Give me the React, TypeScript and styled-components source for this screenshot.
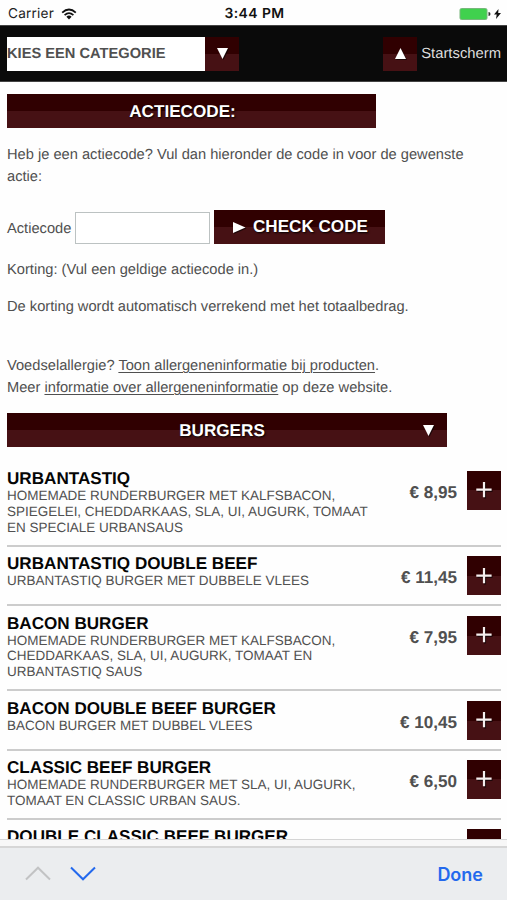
import React from "react";
import styled, { createGlobalStyle } from "styled-components";

const GlobalStyle = createGlobalStyle`
  * { box-sizing: border-box; }
  body { margin: 0; background: #fefefe; }
`;

const gloss = "linear-gradient(to bottom, #300001 0, #300001 50%, #461114 50%, #461114 100%)";

const Screen = styled.div`
  width: 507px;
  height: 900px;
  display: flex;
  flex-direction: column;
  overflow: hidden;
  background: #fefefe;
  color: #505050;
  font-family: "Liberation Sans", Arial, sans-serif;
  font-size: 14.67px;
  white-space: nowrap;
  text-rendering: geometricPrecision;
`;

const StatusBar = styled.header`
  height: 25px;
  flex: none;
  display: grid;
  grid-template-columns: 1fr auto 1fr;
  align-items: center;
  padding: 2px 6px 0 8px;
  color: #222;
  font-family: Inter, sans-serif;
  font-size: 13.6px;
`;

const Carrier = styled.div`
  display: flex;
  align-items: center;
  gap: 7px;
  letter-spacing: 0.2px;
`;

const Clock = styled.div`
  font-size: 13.9px;
  font-weight: 600;
  letter-spacing: 0.45px;
  color: #111;
`;

const Power = styled.div`
  display: flex;
  justify-content: flex-end;
`;

const NavBar = styled.nav`
  height: 57px;
  flex: none;
  display: flex;
  align-items: center;
  justify-content: space-between;
  padding: 0 6px 0 7px;
  background: #0a0a0a;
  border-top: 1px solid #444;
  border-bottom: 1px solid #444;
`;

const Group = styled.div`
  display: flex;
  align-items: center;
`;

const Select = styled.div`
  width: 198px;
  height: 34px;
  line-height: 34px;
  background: #fff;
  font-weight: bold;
`;

const SquareButton = styled.button<{ $tall?: boolean }>`
  width: 34px;
  height: ${(p) => (p.$tall ? 39 : 34)}px;
  padding: 0;
  border: 0;
  background: ${gloss};
  display: flex;
  align-items: center;
  justify-content: center;
`;

const HomeLabel = styled.span`
  margin-left: 4px;
  color: #ddd;
  font-size: 14.8px;
`;

const Page = styled.main`
  flex: 1;
  min-height: 0;
  overflow: hidden;
  padding: 12px 6px 0 7px;
`;

const Banner = styled.h2<{ $width: number; $gap: number; $indent: number }>`
  width: ${(p) => p.$width}px;
  height: 34px;
  margin: 0 0 ${(p) => p.$gap}px;
  padding: 0 11px 0 ${(p) => p.$indent}px;
  display: grid;
  grid-template-columns: 1fr 14px;
  align-items: center;
  text-align: center;
  background: ${gloss};
  color: #fff;
  font-size: 17.15px;
  text-shadow: 1px 1px 2px #000;
`;

const Para = styled.p<{ $gap: number }>`
  margin: 0 0 ${(p) => p.$gap}px;
  line-height: 22px;
`;

const CodeForm = styled.form`
  display: flex;
  align-items: center;
  height: 34px;
  margin-bottom: 15px;
`;

const CodeInput = styled.input`
  width: 135px;
  height: 32px;
  margin: 2px 4px 0 4px;
  border: 1px solid #bcc2c2;
  background: #fff;
`;

const CodeLabel = styled.label`
  width: 64px;
  padding-top: 3px;
`;

const CheckButton = styled.button`
  width: 171px;
  height: 34px;
  display: flex;
  align-items: center;
  gap: 7px;
  padding: 0 0 0 19px;
  border: 0;
  background: ${gloss};
  color: #fff;
  font: bold 17.1px "Liberation Sans", Arial, sans-serif;
  text-shadow: 1px 1px 2px #000;
`;

const Link = styled.a`
  text-decoration: underline;
  text-decoration-thickness: 1px;
  text-underline-offset: 2px;
`;

const Menu = styled.section`
  padding-top: 0.7px;
`;

const Product = styled.article<{ $height: number }>`
  height: ${(p) => p.$height}px;
  display: grid;
  grid-template-columns: 1fr auto 34px;
  column-gap: 10px;
  align-items: start;
  padding-top: 9.3px;
  border-bottom: 2px solid #ccc;
`;

const Title = styled.h3`
  margin: -1px 0 0;
  color: #050505;
  font-size: 17.1px;
  line-height: 18px;
`;

const Description = styled.p`
  margin: 0;
  font-size: 13.48px;
  line-height: 15.8px;
  white-space: pre-line;
`;

const Price = styled.div`
  font-size: 17.1px;
  font-weight: bold;
  line-height: 20px;
  padding-top: 12px;
`;

const Toolbar = styled.footer`
  height: 60px;
  flex: none;
  display: flex;
  align-items: center;
  justify-content: space-between;
  padding: 0 24px 0 25px;
  background: #ebedef;
  border-top: 6px solid #f7f7f7;
  box-shadow: 0 -1px 0 #d5d5d5, inset 0 2px 0 #d6d6d6;
`;

const Arrows = styled.div`
  display: flex;
  gap: 19px;
`;

const Done = styled.button`
  padding: 2px 0 0;
  border: 0;
  background: none;
  color: #2369ed;
  font: 600 18px Inter, sans-serif;
`;

const Wifi = () => (
  <svg width="16" height="12" viewBox="0 0 16 12" fill="none" stroke="#111" strokeWidth="1.8">
    <path d="M1.2 4.6Q8-1.6 14.8 4.6M3.6 7.1Q8 3.2 12.4 7.1" />
    <path d="M5.4 8.7Q8 6.5 10.6 8.7L8 11.6Z" fill="#111" stroke="none" />
  </svg>
);

const Battery = () => (
  <svg width="42" height="14" viewBox="0 0 42 14">
    <rect x="1" y="1.5" width="27" height="11" rx="1.5" fill="#40d14e" stroke="#77b77b" />
    <path d="M29.5 5q2 .2 2 2t-2 2z" fill="#333" />
    <path d="M39.5 2L35 7.5h2.7L37 12l5-6h-2.8z" fill="#111" />
  </svg>
);

const shapes = {
  down: "M1 1H12L6.5 12Z",
  up: "M1 12H12L6.5 1Z",
  right: "M0 1V12L12.5 6.5Z",
};

const Triangle = ({ dir }: { dir: keyof typeof shapes }) => (
  <svg width="13" height="13" viewBox="0 0 13 13" overflow="visible">
    <path d={shapes[dir]} transform="translate(1 1)" fill="#000" opacity=".6" />
    <path d={shapes[dir]} fill="#fff" />
  </svg>
);

const Plus = () => (
  <svg width="18" height="20" viewBox="0 0 18 20" fill="none" strokeWidth="2.2">
    <path d="M10 3.5V18.5M2.5 11H17.5" stroke="#000" opacity=".6" />
    <path d="M9 2V17.3M1.3 9.6H16.6" stroke="#f5eeee" />
  </svg>
);

const Chevron = ({ up }: { up?: boolean }) => (
  <svg width="26" height="15" viewBox="0 0 26 15" fill="none" strokeWidth="2">
    <path d={up ? "M1 13.5L13 1.7L25 13.5" : "M1 1.5L13 13.3L25 1.5"} stroke={up ? "#c2c3c4" : "#2369ed"} />
  </svg>
);

const products = [
  { name: "URBANTASTIQ", text: "HOMEMADE RUNDERBURGER MET KALFSBACON,\nSPIEGELEI, CHEDDARKAAS, SLA, UI, AUGURK, TOMAAT\nEN SPECIALE URBANSAUS", price: "8,95", height: 85.3 },
  { name: "URBANTASTIQ DOUBLE BEEF", text: "URBANTASTIQ BURGER MET DUBBELE VLEES", price: "11,45", height: 59.4 },
  { name: "BACON BURGER", text: "HOMEMADE RUNDERBURGER MET KALFSBACON,\nCHEDDARKAAS, SLA, UI, AUGURK, TOMAAT EN\nURBANTASTIQ SAUS", price: "7,95", height: 85 },
  { name: "BACON DOUBLE BEEF BURGER", text: "BACON BURGER MET DUBBEL VLEES", price: "10,45", height: 59.3 },
  { name: "CLASSIC BEEF BURGER", text: "HOMEMADE RUNDERBURGER MET SLA, UI, AUGURK,\nTOMAAT EN CLASSIC URBAN SAUS.", price: "6,50", height: 69.3 },
  { name: "DOUBLE CLASSIC BEEF BURGER", text: "", price: "", height: 69 },
];

export default function App() {
  return (
    <Screen>
      <GlobalStyle />
      <StatusBar>
        <Carrier>Carrier <Wifi /></Carrier>
        <Clock>3:44 PM</Clock>
        <Power><Battery /></Power>
      </StatusBar>
      <NavBar>
        <Group>
          <Select>KIES EEN CATEGORIE</Select>
          <SquareButton><Triangle dir="down" /></SquareButton>
        </Group>
        <Group>
          <SquareButton><Triangle dir="up" /></SquareButton>
          <HomeLabel>Startscherm</HomeLabel>
        </Group>
      </NavBar>
      <Page>
        <Banner $width={369} $gap={16} $indent={7}><span>ACTIECODE:</span></Banner>
        <Para $gap={22}>Heb je een actiecode? Vul dan hieronder de code in voor de gewenste<br />actie:</Para>
        <CodeForm>
          <CodeLabel htmlFor="code">Actiecode</CodeLabel>
          <CodeInput id="code" />
          <CheckButton type="button"><Triangle dir="right" />CHECK CODE</CheckButton>
        </CodeForm>
        <Para $gap={15}>Korting: (Vul een geldige actiecode in.)</Para>
        <Para $gap={37}>De korting wordt automatisch verrekend met het totaalbedrag.</Para>
        <Para $gap={14}>
          Voedselallergie? <Link>Toon allergeneninformatie bij producten</Link>.<br />
          Meer <Link>informatie over allergeneninformatie</Link> op deze website.
        </Para>
        <Banner $width={440} $gap={14} $indent={15}><span>BURGERS</span><Triangle dir="down" /></Banner>
        <Menu>
          {products.map((p) => (
            <Product key={p.name} $height={p.height}>
              <div>
                <Title>{p.name}</Title>
                <Description>{p.text}</Description>
              </div>
              <Price>{p.price && `€ ${p.price}`}</Price>
              <SquareButton $tall><Plus /></SquareButton>
            </Product>
          ))}
        </Menu>
      </Page>
      <Toolbar>
        <Arrows><Chevron up /><Chevron /></Arrows>
        <Done>Done</Done>
      </Toolbar>
    </Screen>
  );
}
